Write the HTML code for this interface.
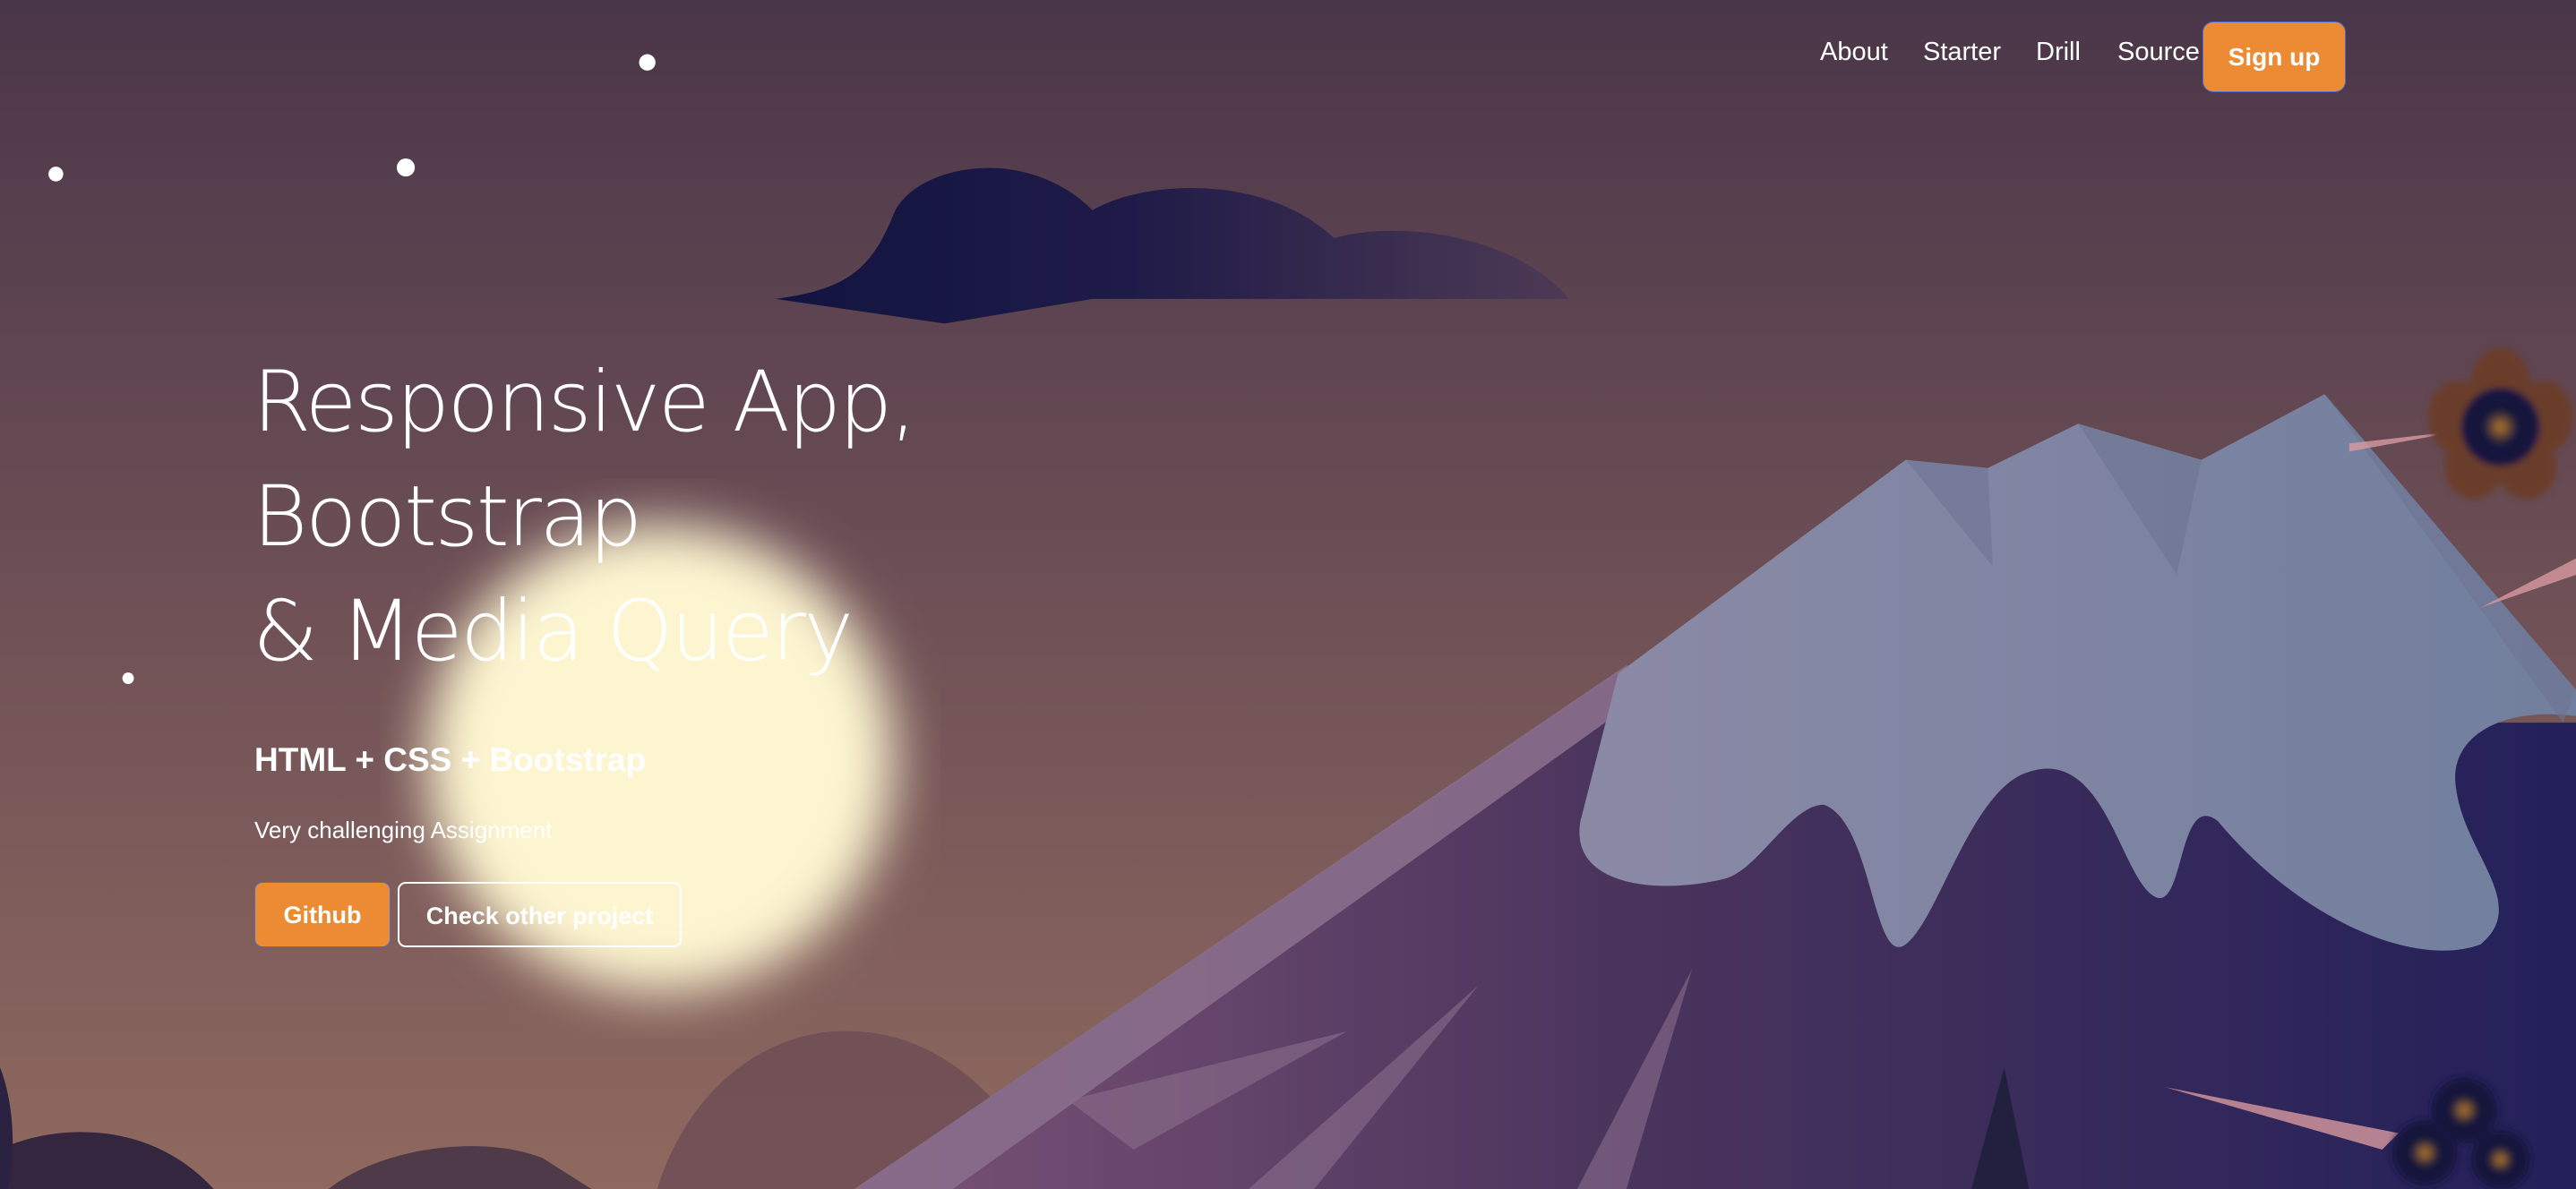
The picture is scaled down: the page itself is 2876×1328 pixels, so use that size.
<!DOCTYPE html>
<html><head><meta charset="utf-8">
<style>
html,body{margin:0;padding:0;width:2876px;height:1328px;overflow:hidden;}
body{position:relative;font-family:"Liberation Sans",sans-serif;color:#fff;background:#6a4d55;}
svg.bg{position:absolute;left:0;top:0;width:2876px;height:1328px;}
.nav a{position:absolute;top:38px;font-size:29px;color:#fff;text-decoration:none;line-height:40px;}
.signup{position:absolute;left:2459px;top:24px;width:158px;height:77px;background:#ec8b33;border:1px solid #4a6fd0;border-radius:12px;font-weight:bold;font-size:28px;line-height:77px;text-align:center;}
h1{position:absolute;left:282px;top:386px;margin:0;font-family:"DejaVu Sans",sans-serif;font-weight:200;font-size:94px;line-height:128px;letter-spacing:-2.5px;white-space:nowrap;}
.sub{position:absolute;left:284px;top:828px;font-size:37px;font-weight:bold;white-space:nowrap;}
.small{position:absolute;left:284px;top:912px;font-size:26px;white-space:nowrap;}
.btn{position:absolute;top:985px;height:73px;border-radius:9px;font-weight:bold;font-size:27px;line-height:73px;text-align:center;box-sizing:border-box;}
.gh{left:284px;width:152px;background:#ec8b33;border:1px solid #4a6fd0;}
.co{left:444px;width:317px;border:2px solid #fff;}
</style></head><body>
<svg class="bg" viewBox="0 0 1568 724" preserveAspectRatio="none">
<defs>
<linearGradient id="sky" x1="0" y1="0" x2="0" y2="1">
<stop offset="0" stop-color="#4a3649"/><stop offset="0.5" stop-color="#6e5056"/><stop offset="1" stop-color="#8f695f"/></linearGradient>
<linearGradient id="cl" x1="0" y1="0" x2="1" y2="0">
<stop offset="0" stop-color="#121440"/><stop offset="0.45" stop-color="#1f1b48"/><stop offset="1" stop-color="#4d3a55"/></linearGradient>
<linearGradient id="mt" x1="0" y1="0" x2="1" y2="0">
<stop offset="0" stop-color="#7a5276"/><stop offset="0.45" stop-color="#4a345c"/><stop offset="1" stop-color="#23205a"/></linearGradient>
<linearGradient id="sn" x1="0" y1="0" x2="1" y2="0">
<stop offset="0" stop-color="#8b8aa6"/><stop offset="1" stop-color="#717f9e"/></linearGradient>
<filter id="bl"><feGaussianBlur stdDeviation="16"/></filter>
<filter id="b2"><feGaussianBlur stdDeviation="2"/></filter>
<radialGradient id="fc"><stop offset="0" stop-color="#b87a2a"/><stop offset="0.45" stop-color="#12163d"/><stop offset="1" stop-color="#1a1a40"/></radialGradient>
</defs>
<rect width="1568" height="724" fill="url(#sky)"/>
<path d="M472,182 C520,176 532,160 545,128 C560,100 625,88 665,128 C695,110 770,105 812,145 C855,133 925,145 955,182 L665,182 L575,197 Z" fill="url(#cl)"/>
<circle cx="402" cy="462" r="142" fill="#fdf5d0" filter="url(#bl)"/>
<path d="M400,724 C420,660 470,625 520,628 C580,630 620,680 640,724 Z" fill="#6e4e55" opacity="0.85"/>
<path d="M200,724 C230,700 290,690 330,705 L360,724 Z" fill="#4f3a4a"/>
<path d="M0,724 L0,700 C30,685 90,680 130,724 Z" fill="#35263f"/>
<path d="M0,650 C8,670 10,700 5,724 L0,724 Z" fill="#2a2240"/>
<path d="M520,724 L1000,400 L1200,440 L1568,440 L1568,724 Z" fill="url(#mt)"/>
<path d="M520,724 L990,405 L1005,420 L580,724 Z" fill="#8a6e8c" opacity="0.9"/>
<path d="M650,670 L820,628 L690,700 Z M760,724 L900,600 L800,724 Z M960,724 L1030,590 L990,724 Z" fill="#8a6e8c" opacity="0.6"/>
<path d="M1200,724 L1220,650 L1235,724 Z" fill="#22203f"/>
<path d="M985,410 L1160,280 L1210,285 L1265,258 L1340,280 L1415,240 L1568,420 L1568,436 C1520,430 1490,450 1495,480 C1500,520 1540,550 1510,575 C1470,590 1400,560 1350,500 C1325,480 1330,560 1310,545 C1290,530 1280,455 1235,470 C1200,480 1180,560 1160,575 C1140,590 1140,500 1110,490 C1090,490 1070,530 1050,535 C1010,545 955,540 962,500 Z" fill="url(#sn)"/>
<path d="M1160,280 L1210,285 L1213,345 Z M1265,258 L1340,280 L1325,350 Z M1415,240 L1568,420 L1560,440 Z" fill="#6e7592" opacity="0.6"/>
<path d="M1430,270 L1500,262 L1430,275 Z M1510,370 L1568,340 L1568,350 Z M1318,662 L1460,690 L1450,700 Z" fill="#d89aa0" opacity="0.8"/>
<g filter="url(#b2)">
<g transform="translate(1522,260)">
<ellipse cx="0" cy="-26" rx="18" ry="22" fill="#6a3d2a"/><ellipse cx="-26" cy="-6" rx="18" ry="22" fill="#6a3d2a"/><ellipse cx="26" cy="-6" rx="18" ry="22" fill="#6a3d2a"/><ellipse cx="-16" cy="24" rx="18" ry="20" fill="#6a3d2a"/><ellipse cx="16" cy="24" rx="18" ry="20" fill="#6a3d2a"/>
<circle r="24" fill="url(#fc)"/></g>
<g transform="translate(1500,676)"><circle r="20" fill="url(#fc)"/><circle cx="-24" cy="26" r="20" fill="url(#fc)"/><circle cx="22" cy="30" r="18" fill="url(#fc)"/></g>
</g>
<circle cx="394" cy="38" r="5" fill="#fff"/><circle cx="34" cy="106" r="4.5" fill="#fff"/><circle cx="247" cy="102" r="5.5" fill="#fff"/><circle cx="78" cy="413" r="3.5" fill="#fff"/>
</svg>
<div class="nav"><a style="left:2032px">About</a><a style="left:2147px">Starter</a><a style="left:2273px">Drill</a><a style="left:2364px">Source</a></div>
<div class="signup">Sign up</div>
<h1>Responsive App,<br>Bootstrap<br>&amp; Media Query</h1>
<div class="sub">HTML + CSS + Bootstrap</div>
<div class="small">Very challenging Assignment</div>
<div class="btn gh">Github</div>
<div class="btn co">Check other project</div>
</body></html>
